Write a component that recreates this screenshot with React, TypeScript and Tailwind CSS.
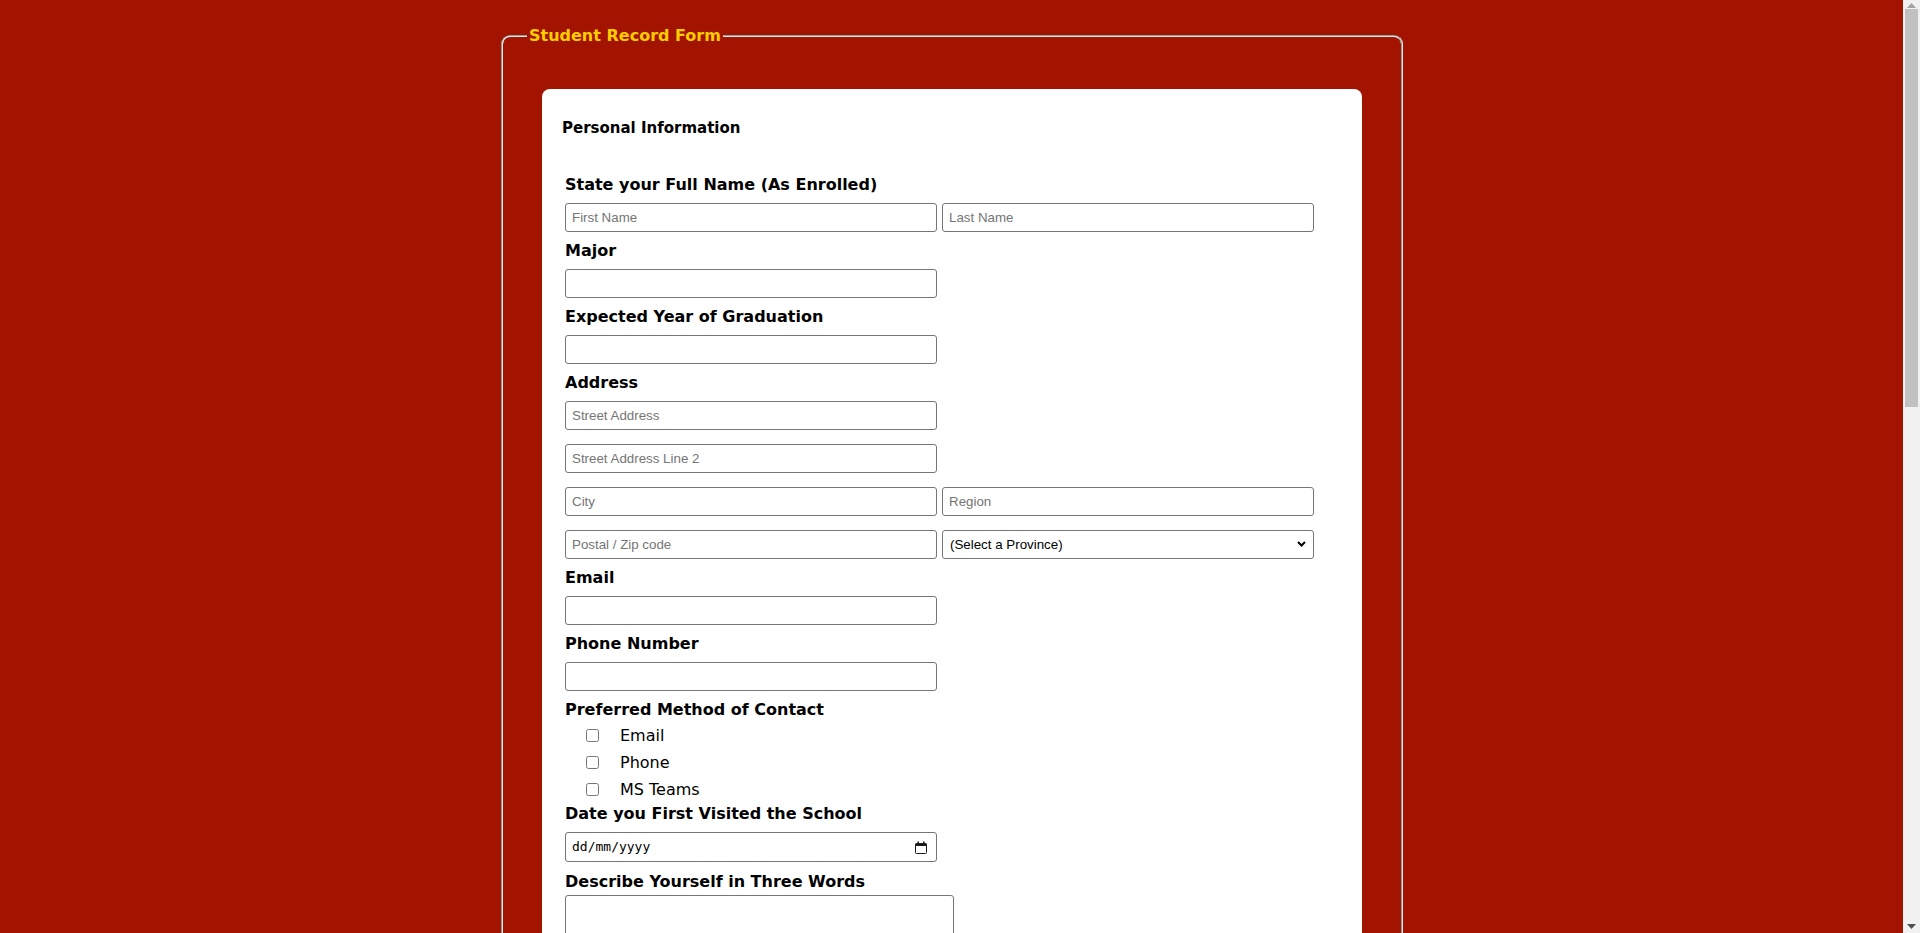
import React from 'react'

// Student record form: red page, grooved fieldset, white card with the inputs

const labelCls =
  "block h-5 leading-5 mb-2 text-[16px] font-bold text-black [font-family:'DejaVu_Sans',Verdana,sans-serif]"
const inputCls =
  "block w-[372px] h-[29px] px-[6px] border border-[#767676] rounded-[3px] bg-white text-[13.33px] text-black [font-family:'Liberation_Sans',Arial,sans-serif] placeholder:text-[#757575] outline-none"

function Field({ label, children }: { label: string; children: React.ReactNode }) {
  return (
    <div>
      <span className={labelCls}>{label}</span>
      {children}
    </div>
  )
}

function CalendarIcon() {
  return (
    <svg width="12" height="13" viewBox="0 0 12 13" fill="none">
      <rect x="0.5" y="2.5" width="11" height="10" rx="1" stroke="#1a1a1a" />
      <rect x="0.5" y="2.5" width="11" height="2.5" fill="#1a1a1a" />
      <rect x="2.5" y="0.5" width="1.5" height="2.5" fill="#1a1a1a" />
      <rect x="8" y="0.5" width="1.5" height="2.5" fill="#1a1a1a" />
    </svg>
  )
}

// window scrollbar as seen in the screenshot
function Scrollbar() {
  return (
    <div className="fixed top-0 right-0 w-[17px] h-screen bg-[#f1f1f1] flex flex-col items-center">
      <svg className="mt-[3px]" width="9" height="5" viewBox="0 0 9 5">
        <path d="M0 5L4.5 0L9 5z" fill="#a3a3a3" />
      </svg>
      <div className="mt-[1px] w-[13px] h-[398px] bg-[#c1c1c1]" />
      <div className="flex-1" />
      <svg className="mb-[4px]" width="9" height="5" viewBox="0 0 9 5">
        <path d="M0 0L9 0L4.5 5z" fill="#505050" />
      </svg>
    </div>
  )
}

export default function App() {
  const contacts = ['Email', 'Phone', 'MS Teams']

  return (
    <div className="min-h-screen bg-[#a31400] pt-[26px] pb-[60px]">
      <fieldset className="ml-[501px] w-[902px] border-2 [border-style:groove] border-[#ececec] rounded-[9px] px-[24px] pb-[40px]">
        <legend className="px-[2px] text-[16px] leading-[19px] font-bold text-[#ffcc00] [font-family:'DejaVu_Sans',Verdana,sans-serif]">
          Student Record Form
        </legend>

        <div className="mx-[15px] mt-[44px] w-[820px] min-h-[1900px] bg-white rounded-[8px] pt-[30px] px-[20px]">
          <h3 className="text-[15px] leading-[18px] font-bold text-black [font-family:'DejaVu_Sans',Verdana,sans-serif]">
            Personal Information
          </h3>

          <div className="pl-[3px] mt-[38px] flex flex-col gap-[9px]">
            <Field label="State your Full Name (As Enrolled)">
              <div className="flex gap-[5px]">
                <input className={inputCls} placeholder="First Name" />
                <input className={inputCls} placeholder="Last Name" />
              </div>
            </Field>

            <Field label="Major">
              <input className={inputCls} />
            </Field>

            <Field label="Expected Year of Graduation">
              <input className={inputCls} />
            </Field>

            <Field label="Address">
              <div className="flex flex-col gap-[14px]">
                <input className={inputCls} placeholder="Street Address" />
                <input className={inputCls} placeholder="Street Address Line 2" />
                <div className="flex gap-[5px]">
                  <input className={inputCls} placeholder="City" />
                  <input className={inputCls} placeholder="Region" />
                </div>
                <div className="flex gap-[5px]">
                  <input className={inputCls} placeholder="Postal / Zip code" />
                  <div className="relative">
                    <select className={inputCls + ' appearance-none pl-[7px]'} defaultValue="">
                      <option value="">(Select a Province)</option>
                      <option>Alberta</option>
                      <option>British Columbia</option>
                      <option>Manitoba</option>
                      <option>New Brunswick</option>
                      <option>Newfoundland and Labrador</option>
                      <option>Nova Scotia</option>
                      <option>Ontario</option>
                      <option>Prince Edward Island</option>
                      <option>Quebec</option>
                      <option>Saskatchewan</option>
                    </select>
                    <svg
                      className="absolute right-[8px] top-[11px] pointer-events-none"
                      width="9"
                      height="6"
                      viewBox="0 0 9 6"
                      fill="none"
                    >
                      <path d="M1 1l3.5 3.5L8 1" stroke="#000" strokeWidth="2" />
                    </svg>
                  </div>
                </div>
              </div>
            </Field>

            <Field label="Email">
              <input className={inputCls} />
            </Field>

            <Field label="Phone Number">
              <input className={inputCls} />
            </Field>

            <div className="-mb-[8px]">
              <span className="block h-5 leading-5 text-[16px] font-bold text-black [font-family:'DejaVu_Sans',Verdana,sans-serif]">
                Preferred Method of Contact
              </span>
              <div className="mt-[2px] flex flex-col">
                {contacts.map((c) => (
                  <label key={c} className="h-[27px] flex items-center">
                    <input type="checkbox" className="ml-[21px] w-[13px] h-[13px] m-0" />
                    <span className="ml-[21px] text-[16px] text-black [font-family:'DejaVu_Sans',Verdana,sans-serif]">
                      {c}
                    </span>
                  </label>
                ))}
              </div>
            </div>

            <Field label="Date you First Visited the School">
              <div className="w-[372px] h-[30px] px-[6px] border border-[#767676] rounded-[3px] flex items-center justify-between">
                <span className="text-[13px] text-black [font-family:'DejaVu_Sans_Mono',monospace]">
                  dd/mm/yyyy
                </span>
                <span className="mr-[3px] flex">
                  <CalendarIcon />
                </span>
              </div>
            </Field>

            <div className="mt-[1px]">
              <span className="block h-5 leading-5 mb-[3px] text-[16px] font-bold text-black [font-family:'DejaVu_Sans',Verdana,sans-serif]">
                Describe Yourself in Three Words
              </span>
              <textarea className="block w-[389px] h-[100px] border border-[#767676] rounded-[3px] resize-none outline-none" />
            </div>
          </div>
        </div>
      </fieldset>
      <Scrollbar />
    </div>
  )
}
